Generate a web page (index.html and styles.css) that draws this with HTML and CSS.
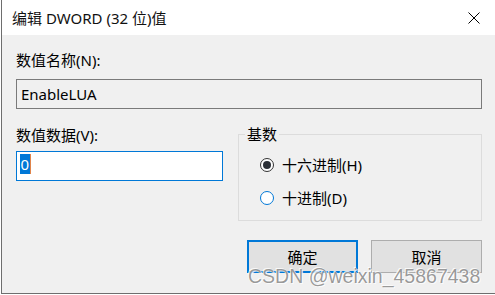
FILE: index.html
```html
<!DOCTYPE html>
<html>
<head>
<meta charset="utf-8">
<link rel="stylesheet" href="styles.css">
</head>
<body>
<div class="window">
  <div class="titlebar">
    <span class="title">编辑 DWORD (32 位)值</span>
    <svg class="close" width="12" height="12" viewBox="0 0 12 12"><path d="M0.5 0.5L11.5 11.5M11.5 0.5L0.5 11.5" stroke="#000" stroke-width="1" fill="none"/></svg>
  </div>
  <div class="content">
    <div class="label">数值名称(N):</div>
    <div class="field name">EnableLUA</div>
    <div class="row">
      <div class="col-left">
        <div class="label">数值数据(V):</div>
        <div class="field data"><span class="sel">0</span><span class="caret"></span></div>
      </div>
      <div class="group">
        <span class="legend">基数</span>
        <div class="radio"><span class="dot checked"></span>十六进制(H)</div>
        <div class="radio second"><span class="dot focus"></span>十进制(D)</div>
      </div>
    </div>
    <div class="buttons">
      <div class="btn default">确定</div>
      <div class="btn">取消</div>
    </div>
  </div>
  <div class="watermark">CSDN @weixin_45867438</div>
</div>
</body>
</html>
```
FILE: styles.css
```css
html, body {
  margin: 0;
  padding: 0;
  background: #ffffff;
}
body {
  width: 495px;
  height: 295px;
  overflow: hidden;
}
.window {
  position: relative;
  margin-left: 1px;
  height: 294px;
  box-sizing: border-box;
  border-left: 1px solid #6e6e6e;
  border-bottom: 1px solid #6e6e6e;
  background: #f0f0f0;
  font-family: "Noto Sans", "Noto Sans CJK SC", sans-serif;
  font-size: 15px;
  color: #000;
}
.titlebar {
  height: 35px;
  background: #ffffff;
  display: flex;
  align-items: center;
  justify-content: space-between;
  padding: 0 15px 0 10px;
  color: #111;
}
.title {
  line-height: 20px;
}
.close {
  display: block;
}
.content {
  padding: 15px 13px 0 14px;
}
.label {
  line-height: 20px;
}
.field {
  box-sizing: border-box;
  height: 30px;
}
.field.name {
  margin-top: 9px;
  border: 1px solid #7a7a7a;
  background: #f0f0f0;
  padding-left: 4px;
  line-height: 28px;
}
.row {
  display: flex;
  align-items: flex-start;
  margin-top: 16px;
}
.col-left {
  width: 207px;
}
.field.data {
  margin-top: 6px;
  border: 1px solid #0078d7;
  background: #ffffff;
  padding: 2px 0 0 3px;
  display: flex;
  align-items: flex-start;
}
.sel {
  display: inline-block;
  height: 20px;
  line-height: 20px;
  background: #0078d7;
  color: #ffffff;
  padding: 0 0.5px;
}
.caret {
  display: inline-block;
  width: 1px;
  height: 20px;
  background: #e0844a;
}
.group {
  position: relative;
  margin: 9px 0 0 15px;
  width: 244px;
  height: 87px;
  box-sizing: border-box;
  border: 1px solid #dcdcdc;
  padding: 20px 0 0 21px;
}
.legend {
  position: absolute;
  left: 6px;
  top: -11px;
  padding: 0 2px;
  line-height: 20px;
  background: #f0f0f0;
}
.radio {
  display: flex;
  align-items: center;
  height: 20px;
  line-height: 20px;
}
.radio.second {
  margin-top: 13px;
}
.dot {
  width: 14px;
  height: 14px;
  box-sizing: border-box;
  border-radius: 50%;
  background: #ffffff;
  margin-right: 8px;
  display: flex;
  align-items: center;
  justify-content: center;
}
.dot.checked {
  border: 1px solid #333333;
}
.dot.checked::after {
  content: "";
  width: 8px;
  height: 8px;
  border-radius: 50%;
  background: #2b2f36;
}
.dot.focus {
  border: 1px solid #0078d7;
}
.buttons {
  display: flex;
  justify-content: flex-end;
  gap: 13px;
  margin-top: 19px;
}
.btn {
  width: 111px;
  height: 33px;
  box-sizing: border-box;
  background: #e1e1e1;
  border: 1px solid #adadad;
  display: flex;
  align-items: center;
  justify-content: center;
  line-height: 20px;
}
.btn.default {
  border: 2px solid #0078d7;
}
.watermark {
  position: absolute;
  left: 246px;
  top: 266px;
  font-family: "Liberation Sans", Arial, sans-serif;
  font-size: 19.5px;
  line-height: 20px;
  color: rgba(120, 120, 120, 0.75);
  text-shadow: 0 0 1px #ffffff, 1px 1px 0 rgba(255,255,255,0.8), -1px -1px 0 rgba(255,255,255,0.8);
  white-space: nowrap;
}
```
